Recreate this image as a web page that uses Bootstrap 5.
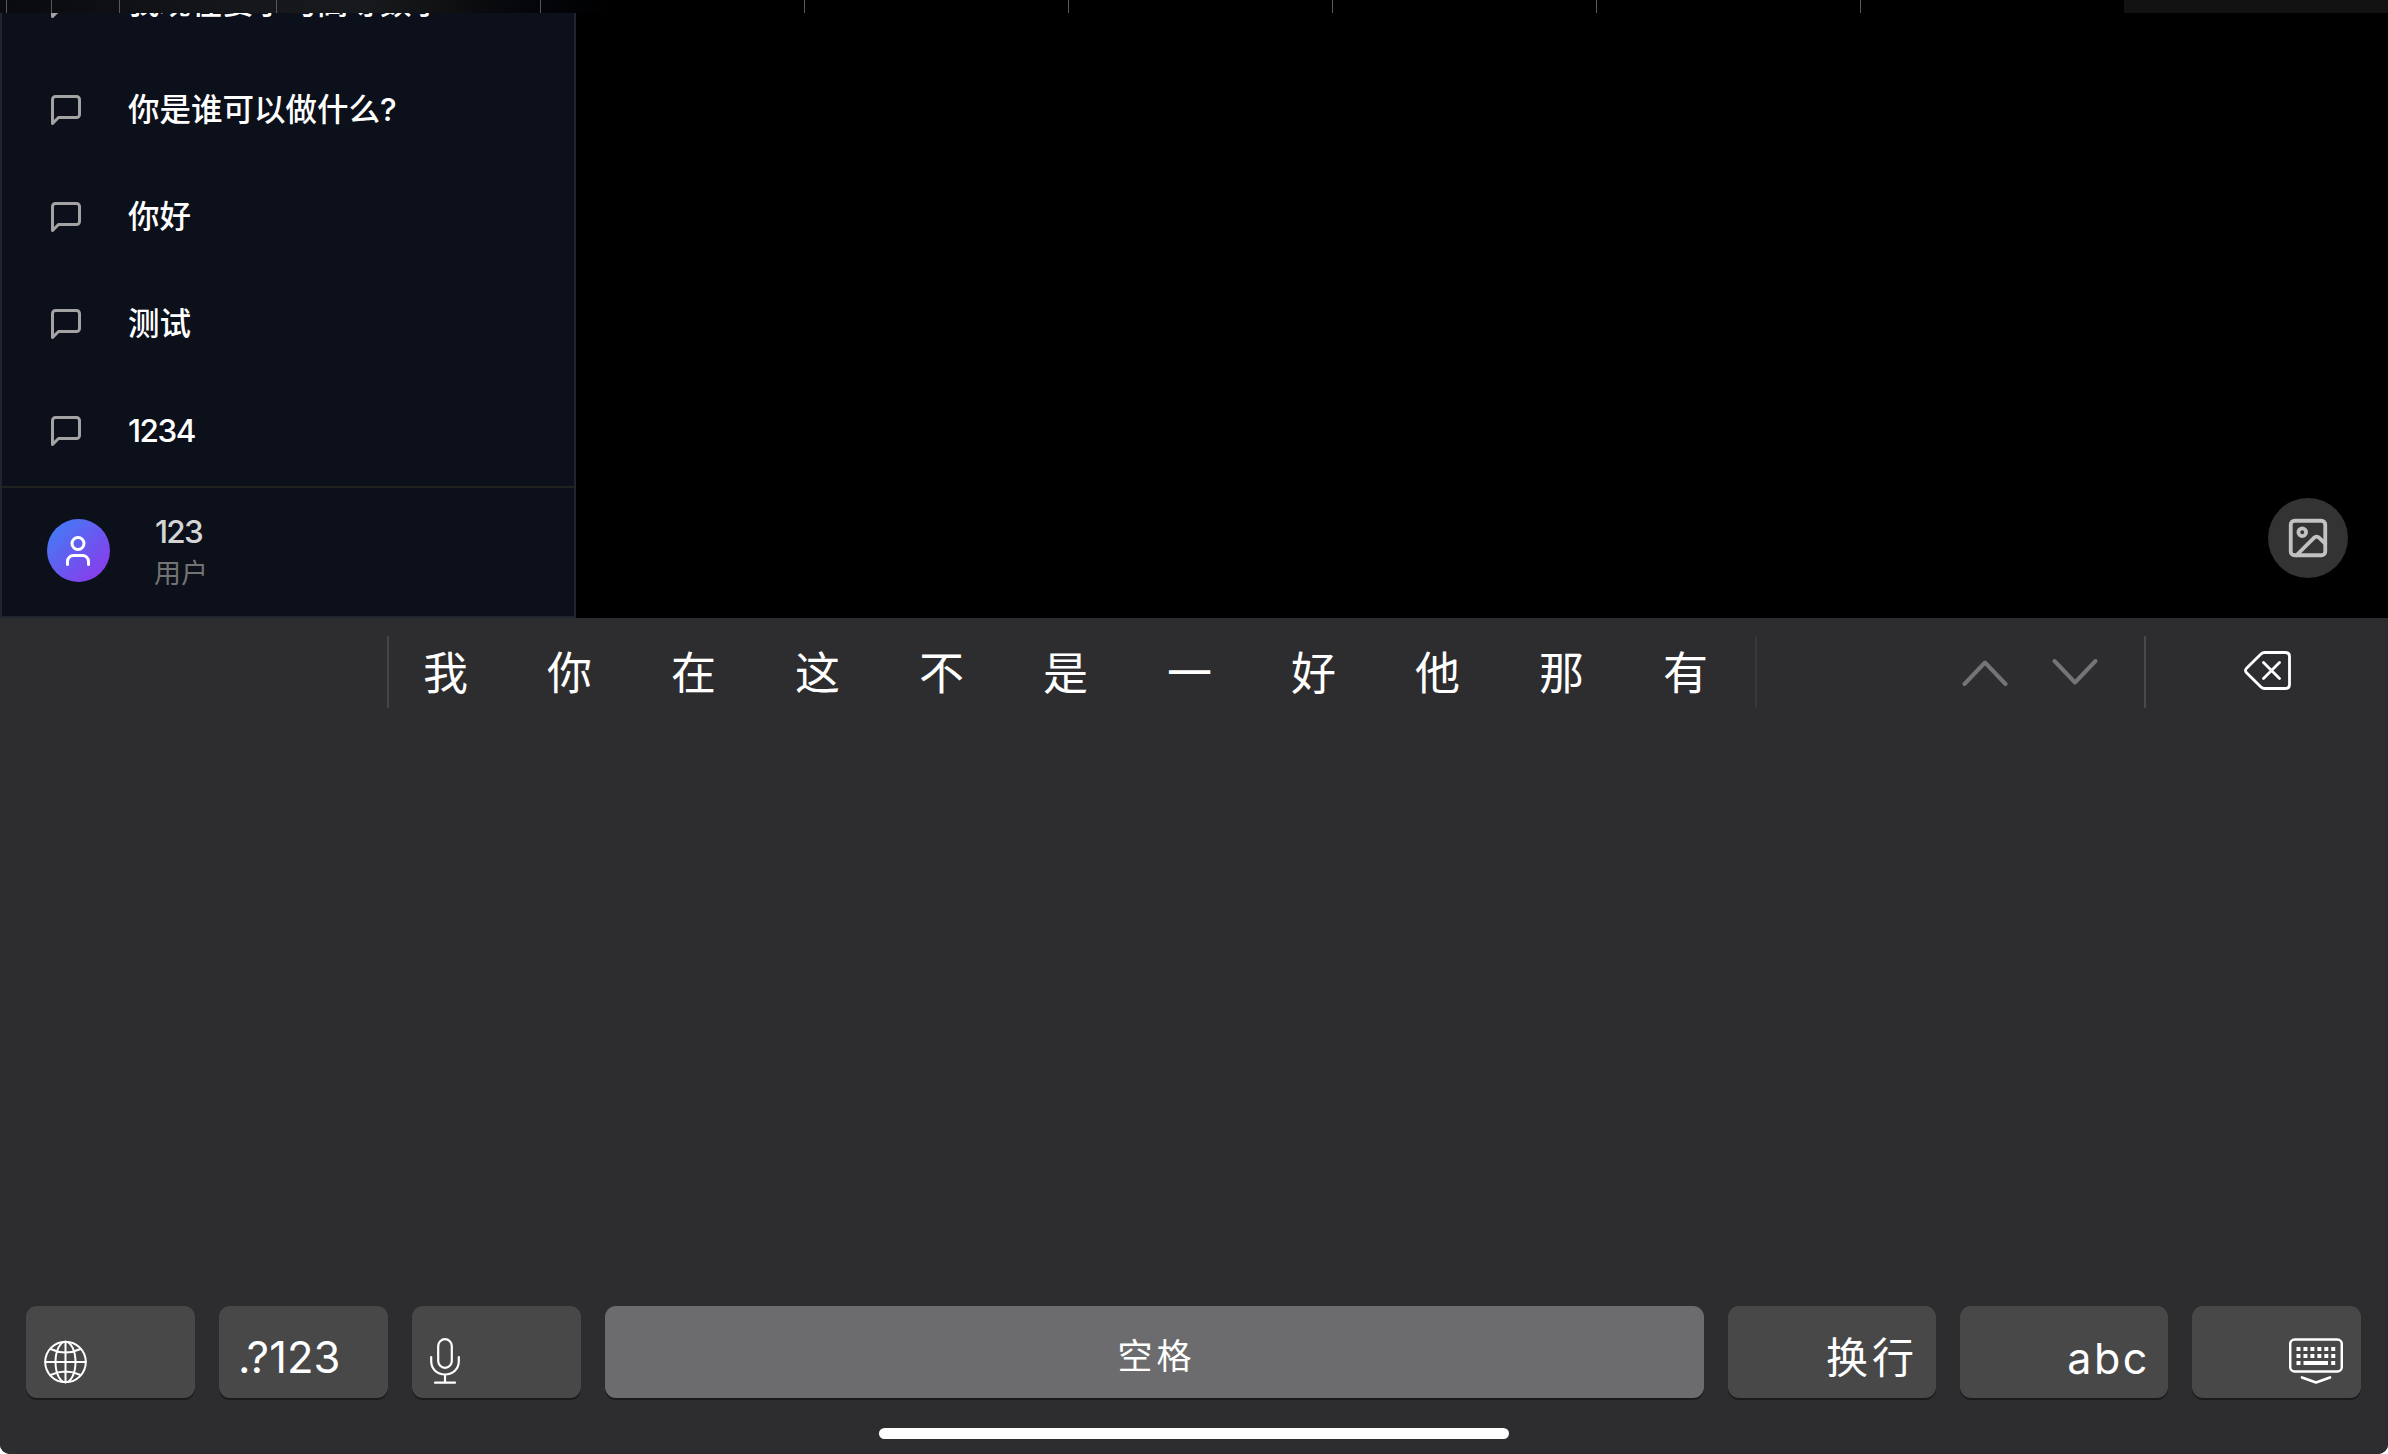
<!DOCTYPE html>
<html lang="zh-CN">
<head>
<meta charset="utf-8">
<title>Chat</title>
<link rel="stylesheet" href="https://cdn.jsdelivr.net/npm/bootstrap@5.3.0/dist/css/bootstrap.min.css">
<style>
html{background:#fff}
body{width:2388px;height:1454px;overflow:hidden;background:#fff;color:#fff;font-family:Inter,"Noto Sans CJK SC",sans-serif;line-height:1}
svg{display:block;flex:none;fill:none;stroke:currentColor;stroke-width:2;stroke-linecap:round;stroke-linejoin:round}
.screen{height:1454px;background:#000;border-radius:0 0 10px 10px;overflow:hidden}
.tabstrip{height:13px;background:linear-gradient(90deg,#090b0e 0,#0c0e11 80px,#15171a 240px,#17191c 370px,#0e1012 450px,#07090c 500px,#020407 560px,#000 610px)}
.tabcell{border-right:1px solid #56585a;flex:none;width:264px}
.tabcell.plain{border:0}
.workspace{height:605px}
.sidebar{width:576px;background:#0c101a;border:2px solid #20242e;border-top:0}
.chats{height:473px;overflow:hidden;padding-bottom:2.5px}
.chat{height:107px;flex:none;padding-left:46px;font-size:31.5px;font-weight:500}
.chat svg{width:36px;height:36px;color:#a3a3a3;margin:2px 44px 0 0}
.chat span{padding-top:1px}
.digits{letter-spacing:-1.5px}
.account{height:130px;border-top:2px solid #20221f;padding:0 0 3px 45px}
.avatar{width:63px;height:63px;background:linear-gradient(135deg,#3b82f6,#9333ea);margin-right:45px;padding-right:1px}
.uname{font-size:31.5px;font-weight:500;color:#d4d4d4;line-height:42px;letter-spacing:-1.8px;padding-top:4px}
.role{font-size:27px;color:#737373;line-height:42px;margin-left:-1px}
.picbtn{width:80px;height:80px;background:#333;color:#c1c1c1;margin:0 40px 40px 0}
.kb{height:836px;background:#2d2d2f}
.cands{height:72px;margin-top:18px}
.cands-list{width:1370px;margin-left:387px;border-left:2px solid #454547;border-right:2px solid #38383a;padding-left:34px;font-size:45px}
.cand{width:124px;flex:none}
.cand span{display:block;line-height:72px;margin-top:2px}
.arrows{width:389px;border-right:2px solid #49494b;color:#747476;padding:1px 46px 0 0}
.arrows svg{stroke-width:4}
.arrows svg+svg{margin-left:44px}
.keys{margin-top:598px;padding:0 27px 0 26px;gap:24px;height:92px}
.kkey{width:169px;background:#484849;border-radius:11px;box-shadow:0 2px 0 #1b1b1d;flex:none}
.wide{width:208px}
.space{width:1099px;background:#6c6c6e}
.t-num{font-size:43.5px;letter-spacing:.1px;padding:12px 0 0 19px}
.t-space{font-size:35px;letter-spacing:4px;padding:8px 0 0 4px}
.t-ret{font-size:42px;letter-spacing:4px;padding:11px 18px 0 0}
.t-abc{font-size:43px;letter-spacing:2.6px;padding:12px 18px 0 0}
.homebar{width:630px;height:11px;background:#fff;border-radius:6px;margin:30px 0 0 879px}
</style>
<script src="https://cdn.jsdelivr.net/npm/bootstrap@5.3.0/dist/js/bootstrap.bundle.min.js"></script>
</head>
<body>
<svg width="0" height="0" class="d-none"><symbol id="bubble" viewBox="0 0 24 24"><path d="M21 15a2 2 0 0 1-2 2H7l-4 4V5a2 2 0 0 1 2-2h14a2 2 0 0 1 2 2z"/></symbol></svg>
<div class="screen d-flex flex-column">
  <div class="tabstrip d-flex flex-shrink-0">
    <div class="tabcell" style="width:7px"></div><div class="tabcell" style="width:45px"></div><div class="tabcell" style="width:68px"></div><div class="tabcell" style="width:157px"></div>
    <div class="tabcell"></div><div class="tabcell"></div><div class="tabcell"></div><div class="tabcell"></div><div class="tabcell"></div><div class="tabcell"></div>
    <div class="tabcell plain" style="width:263px"></div><div class="flex-grow-1" style="background:#121212"></div>
  </div>
  <main class="workspace d-flex flex-shrink-0">
    <aside class="sidebar d-flex flex-column">
      <div class="chats d-flex flex-column justify-content-end">
        <div class="chat d-flex align-items-center"><svg><use href="#bubble"/></svg><span>我现在要学习高等数学</span></div>
        <div class="chat d-flex align-items-center"><svg><use href="#bubble"/></svg><span>你是谁可以做什么?</span></div>
        <div class="chat d-flex align-items-center"><svg><use href="#bubble"/></svg><span>你好</span></div>
        <div class="chat d-flex align-items-center"><svg><use href="#bubble"/></svg><span>测试</span></div>
        <div class="chat d-flex align-items-center"><svg><use href="#bubble"/></svg><span class="digits">1234</span></div>
      </div>
      <div class="account d-flex align-items-center">
        <div class="avatar rounded-circle d-flex align-items-center justify-content-center"><svg width="36" height="36" viewBox="0 0 24 24"><path d="M19 21v-2a4 4 0 0 0-4-4H9a4 4 0 0 0-4 4v2"/><circle cx="12" cy="7" r="4"/></svg></div>
        <div><div class="uname">123</div><div class="role">用户</div></div>
      </div>
    </aside>
    <section class="flex-grow-1 d-flex justify-content-end align-items-end">
      <button class="picbtn btn p-0 border-0 rounded-circle d-flex align-items-center justify-content-center" aria-label="图片"><svg width="46" height="46" viewBox="0 0 24 24"><rect x="3" y="3" width="18" height="18" rx="2"/><circle cx="9" cy="9" r="2"/><path d="m21 15-3.086-3.086a2 2 0 0 0-2.828 0L6 21"/></svg></button>
    </section>
  </main>
  <section class="kb flex-shrink-0 d-flex flex-column">
    <div class="cands d-flex flex-shrink-0">
      <div class="cands-list d-flex flex-shrink-0">
        <div class="cand"><span>我</span></div><div class="cand"><span>你</span></div><div class="cand"><span>在</span></div><div class="cand"><span>这</span></div><div class="cand"><span>不</span></div><div class="cand"><span>是</span></div><div class="cand"><span>一</span></div><div class="cand"><span>好</span></div><div class="cand"><span>他</span></div><div class="cand"><span>那</span></div><div class="cand"><span>有</span></div>
      </div>
      <div class="arrows d-flex justify-content-end align-items-center flex-shrink-0">
        <svg width="46" height="30" viewBox="0 0 46 30"><path d="M2.5 26 23 4.5 43.5 26"/></svg>
        <svg width="46" height="30" viewBox="0 0 46 30"><path d="M2.5 3 23 24.500 43.500 3"/></svg>
      </div>
      <div class="flex-grow-1 d-flex align-items-center" style="padding:0 0 3px 98px">
        <svg width="47" height="39" viewBox="0 0 47 39" style="stroke-width:2.8"><path d="M20.500 1.500H41.500Q45.500 1.500 45.500 5.500V33.500Q45.500 37.500 41.500 37.500H20.500Q18.500 37.500 17 36L2.300 21.500Q.7 19.500 2.300 17.500L17 3Q18.500 1.500 20.500 1.500ZM19.500 11.500 35.500 27.500M35.500 11.500 19.500 27.500"/></svg>
      </div>
    </div>
    <div class="keys d-flex flex-shrink-0">
      <div class="kkey d-flex align-items-end" style="padding:0 0 14px 18px"><svg width="43" height="44" viewBox="0 0 43 44"><circle cx="21.500" cy="22" r="20.300"/><ellipse cx="21.500" cy="22" rx="10" ry="20.300"/><path d="M21.500 1.700V42.300M1.200 22H41.800M6.500 9Q21.500 16 36.500 9M6.500 35Q21.500 28 36.500 35"/></svg></div>
      <div class="kkey t-num d-flex align-items-center">.?123</div>
      <div class="kkey d-flex align-items-end" style="padding:0 0 14px 18px"><svg width="30" height="46" viewBox="0 0 30 46" style="stroke-width:2.200"><rect x="8.200" y="1.200" width="13.600" height="28.600" rx="6.800"/><path d="M1.200 19V23C1.200 31 7 36.500 15 36.500S28.800 31 28.800 23V19M15 36.500V44.700M5 44.700H25"/></svg></div>
      <div class="kkey space t-space d-flex align-items-center justify-content-center">空格</div>
      <div class="kkey wide t-ret d-flex align-items-center justify-content-end">换行</div>
      <div class="kkey wide t-abc d-flex align-items-center justify-content-end">abc</div>
      <div class="kkey d-flex align-items-end justify-content-end" style="padding:0 18px 14px 0"><svg width="54" height="46" viewBox="0 0 54 46"><rect x="1.200" y="1.500" width="51.600" height="32" rx="4.500" style="stroke-width:2.500"/><path d="M7.500 11H47M7.500 18H47" style="stroke-width:4;stroke-linecap:butt;stroke-dasharray:4 2.950"/><path d="M7.500 25H11.500M14.500 25H39M42.200 25H46.200" style="stroke-width:4;stroke-linecap:butt"/><path d="M13 39.500 27 44.500 41 39.500" style="stroke-width:2.700"/></svg></div>
    </div>
    <div class="homebar flex-shrink-0"></div>
  </section>
</div>
</body>
</html>
